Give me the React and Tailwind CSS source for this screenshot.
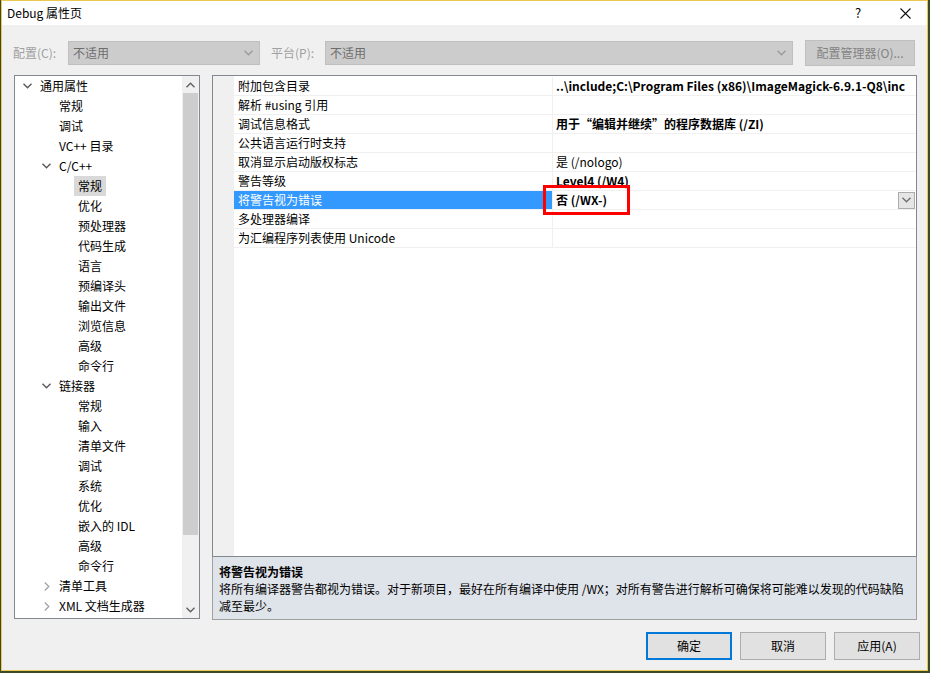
import React from 'react';

const tree = [
  { t: '通用属性', lv: 0, ch: 'open' },
  { t: '常规', lv: 1 },
  { t: '调试', lv: 1 },
  { t: 'VC++ 目录', lv: 1 },
  { t: 'C/C++', lv: 1, ch: 'open' },
  { t: '常规', lv: 2, sel: true },
  { t: '优化', lv: 2 },
  { t: '预处理器', lv: 2 },
  { t: '代码生成', lv: 2 },
  { t: '语言', lv: 2 },
  { t: '预编译头', lv: 2 },
  { t: '输出文件', lv: 2 },
  { t: '浏览信息', lv: 2 },
  { t: '高级', lv: 2 },
  { t: '命令行', lv: 2 },
  { t: '链接器', lv: 1, ch: 'open' },
  { t: '常规', lv: 2 },
  { t: '输入', lv: 2 },
  { t: '清单文件', lv: 2 },
  { t: '调试', lv: 2 },
  { t: '系统', lv: 2 },
  { t: '优化', lv: 2 },
  { t: '嵌入的 IDL', lv: 2 },
  { t: '高级', lv: 2 },
  { t: '命令行', lv: 2 },
  { t: '清单工具', lv: 1, ch: 'closed' },
  { t: 'XML 文档生成器', lv: 1, ch: 'closed' },
];

const indent = ['pl-[6px]', 'pl-[25px]', 'pl-[44px]'];

const props = [
  { k: '附加包含目录', v: '..\\include;C:\\Program Files (x86)\\ImageMagick-6.9.1-Q8\\inc', bold: true },
  { k: '解析 #using 引用', v: '' },
  { k: '调试信息格式', v: '用于“编辑并继续”的程序数据库 (/ZI)', bold: true },
  { k: '公共语言运行时支持', v: '' },
  { k: '取消显示启动版权标志', v: '是 (/nologo)' },
  { k: '警告等级', v: 'Level4 (/W4)', bold: true },
  { k: '将警告视为错误', v: '否 (/WX-)', bold: true, sel: true },
  { k: '多处理器编译', v: '' },
  { k: '为汇编程序列表使用 Unicode', v: '' },
];

const ChevronDown = ({ className = 'text-[#595959]' }) => (
  <svg width="9" height="6" viewBox="0 0 9 6" className={className}>
    <path d="M0.5 0.8 L4.5 4.8 L8.5 0.8" fill="none" stroke="currentColor" strokeWidth="1.4" />
  </svg>
);

const ChevronRight = () => (
  <svg width="6" height="9" viewBox="0 0 6 9" className="text-[#a6a6a6]">
    <path d="M0.8 0.5 L4.8 4.5 L0.8 8.5" fill="none" stroke="currentColor" strokeWidth="1.4" />
  </svg>
);

const ChevronUp = () => (
  <svg width="9" height="6" viewBox="0 0 9 6" className="text-[#606060]">
    <path d="M0.5 5.2 L4.5 1.2 L8.5 5.2" fill="none" stroke="currentColor" strokeWidth="1.4" />
  </svg>
);

const TreeRow = ({ item }) => (
  <div className={`h-[20px] flex items-center ${indent[item.lv]}`}>
    <div className="w-[13px] h-[20px] flex items-center justify-center">
      {item.ch === 'open' && <ChevronDown />}
      {item.ch === 'closed' && <ChevronRight />}
    </div>
    <div className="ml-[6px] whitespace-nowrap">
      {item.sel ? (
        <span className="-ml-[4px] px-[4px] h-[20px] inline-flex items-center bg-[#d9d9d9]">{item.t}</span>
      ) : (
        item.t
      )}
    </div>
  </div>
);

const PropRow = ({ p }) => (
  <div className="h-[19px] flex border-b border-[#f0f0f0]">
    <div
      className={`w-[319px] shrink-0 pl-[4px] flex items-center whitespace-nowrap overflow-hidden border-r border-[#f0f0f0] ${
        p.sel ? 'bg-[#3399ff] text-white' : 'bg-white text-black'
      }`}
    >
      {p.k}
    </div>
    <div className={`flex-1 min-w-0 pl-[3px] flex items-center whitespace-nowrap overflow-hidden ${p.bold ? 'font-bold' : ''}`}>
      <span className="flex-1 overflow-hidden">{p.v}</span>
      {p.sel && (
        <div className="w-[17px] h-[17px] mr-[1px] shrink-0 bg-[#e5e5e5] border border-[#acacac] flex items-center justify-center">
          <ChevronDown className="text-[#707070]" />
        </div>
      )}
    </div>
  </div>
);

const Combo = ({ w }) => (
  <div className={`${w} h-[24px] bg-[#cccccc] border border-[#bfbfbf] flex items-center pl-[4px] pr-[6px] text-[#6d6d6d]`}>
    <span className="flex-1">不适用</span>
    <ChevronDown className="text-[#9a9a9a]" />
  </div>
);

export default function App() {
  return (
    <div className="relative w-[930px] h-[673px] overflow-hidden bg-[#3d4a25] font-['Noto_Sans_CJK_SC','Noto_Sans',sans-serif] text-[12px] leading-[16px] text-black">
      <div className="ml-[1px] w-[927px] h-[671px] border border-[#e9c94f] bg-[#f0f0f0] flex flex-col">
        {/* title bar */}
        <div className="h-[24px] bg-white flex items-center pl-[5px] shrink-0">
          <span className="flex-1">Debug 属性页</span>
          <span className="w-[20px] text-center mr-[32px] text-[13px]">?</span>
          <svg width="11" height="11" viewBox="0 0 11 11" className="mr-[16px]">
            <path d="M0.5 0.5 L10.5 10.5 M10.5 0.5 L0.5 10.5" stroke="#111" strokeWidth="1.1" />
          </svg>
        </div>

        {/* config row */}
        <div className="mt-[15px] h-[26px] flex items-center pl-[11px] shrink-0">
          <span className="w-[55px] text-[#a0a0a0]">配置(C):</span>
          <Combo w="w-[192px]" />
          <span className="ml-[11px] w-[54px] text-[#a0a0a0]">平台(P):</span>
          <Combo w="w-[468px]" />
          <div className="ml-[12px] w-[110px] h-[26px] bg-[#cccccc] border border-[#bfbfbf] flex items-center justify-center text-[#838383]">
            配置管理器(O)...
          </div>
        </div>

        {/* main */}
        <div className="mt-[9px] flex pl-[12px] shrink-0">
          {/* tree */}
          <div className="w-[186px] h-[544px] border border-[#828790] bg-white flex">
            <div className="flex-1 min-w-0 overflow-hidden">
              {tree.map((item, i) => (
                <TreeRow key={i} item={item} />
              ))}
            </div>
            <div className="w-[17px] shrink-0 bg-[#f0f0f0] flex flex-col">
              <div className="h-[17px] flex items-center justify-center">
                <ChevronUp />
              </div>
              <div className="h-[442px] mx-[1px] bg-[#cdcdcd]" />
              <div className="flex-1" />
              <div className="h-[17px] flex items-center justify-center">
                <ChevronDown className="text-[#606060]" />
              </div>
            </div>
          </div>

          {/* property grid */}
          <div className="ml-[12px] w-[705px] h-[545px] flex flex-col">
            <div className="h-[482px] border border-[#828790] bg-white flex">
              <div className="w-[21px] shrink-0 bg-[#f0f0f0]" />
              <div className="flex-1 min-w-0 pt-[1px]">
                {props.map((p, i) => (
                  <PropRow key={i} p={p} />
                ))}
              </div>
            </div>
            <div className="flex-1 border-x border-b border-[#a0a0a0] bg-[#dfe3ea] pl-[6px] pt-[6px] leading-[17px]">
              <div className="font-bold">将警告视为错误</div>
              <div className="whitespace-nowrap">
                将所有编译器警告都视为错误。对于新项目，最好在所有编译中使用 /WX；对所有警告进行解析可确保将可能难以发现的代码缺陷
              </div>
              <div>减至最少。</div>
            </div>
          </div>
        </div>

        {/* buttons */}
        <div className="mt-[12px] flex justify-end gap-[8px] pr-[7px] shrink-0">
          <div className="w-[86px] h-[28px] bg-[#e1e1e1] border-2 border-[#0078d7] flex items-center justify-center">确定</div>
          <div className="w-[86px] h-[28px] bg-[#e1e1e1] border border-[#adadad] flex items-center justify-center">取消</div>
          <div className="w-[86px] h-[28px] bg-[#e1e1e1] border border-[#adadad] flex items-center justify-center">应用(A)</div>
        </div>
      </div>

      {/* red annotation box */}
      <div className="absolute left-[543px] top-[185px] w-[87px] h-[30px] border-[3px] border-[#ff0000]" />
    </div>
  );
}
